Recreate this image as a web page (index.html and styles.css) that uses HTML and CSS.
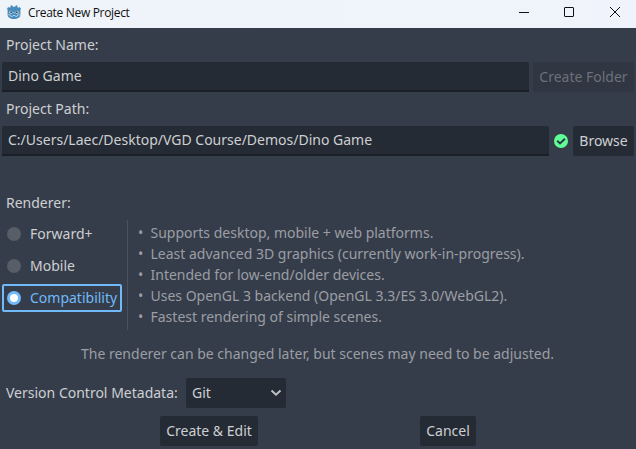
FILE: index.html
```html
<!DOCTYPE html>
<html lang="en">
<head>
<meta charset="utf-8">
<title>Create New Project</title>
<link rel="stylesheet" href="styles.css">
</head>
<body>
<header class="titlebar">
  <svg class="logo" width="14" height="14" viewBox="0 0 14 14">
    <path fill="#478cbf" d="M5 .2 6 1.700h2L9 .2l1.600.5-.1 1.600.8.5 1.300-.9L14 3.500l-.6 1.400v4.900c0 2.600-2.600 4.200-6.400 4.200S.6 12.400.6 9.800V4.900L0 3.500l1.400-1.600 1.300.9.8-.5L3.400.7z"/>
    <circle cx="3.900" cy="7.200" r="1.500" fill="#d4e3ee"/><circle cx="10.100" cy="7.200" r="1.500" fill="#d4e3ee"/>
    <circle cx="4.100" cy="7.200" r=".9" fill="#414042"/><circle cx="9.900" cy="7.200" r=".9" fill="#414042"/>
    <path stroke="#d4e3ee" stroke-width=".7" fill="none" d="M7 7v1.700M1 9.700l2.400.3.300 1.300h2L6 10.500h2l.3.800h2l.3-1.300 2.400-.3"/>
  </svg>
  <h1 class="title">Create New Project</h1>
  <svg class="controls" width="106" height="28" viewBox="0 0 106 28" fill="none" stroke="#111">
    <path d="M1 12.500h10"/><rect x="46.500" y="7.500" width="9" height="9" rx=".5"/><path d="M92 7l10 10M102 7l-10 10"/>
  </svg>
</header>
<main class="dialog">
  <div class="label">Project Name:</div>
  <div class="row">
    <div class="field">Dino Game</div>
    <button class="btn create-folder" disabled>Create Folder</button>
  </div>
  <div class="label">Project Path:</div>
  <div class="row">
    <div class="field">C:/Users/Laec/Desktop/VGD Course/Demos/Dino Game</div>
    <svg class="status" width="16" height="30" viewBox="0 0 16 30">
      <circle cx="8" cy="15" r="7" fill="#5fff97"/><path d="M4.200 14.800 7 17.400l4.900-4.700" fill="none" stroke="#2b3640" stroke-width="2"/>
    </svg>
    <button class="btn browse">Browse</button>
  </div>
  <div class="label renderer-label">Renderer:</div>
  <section class="renderer">
    <div class="options">
      <div class="option"><i class="radio"></i>Forward+</div>
      <div class="option"><i class="radio"></i>Mobile</div>
      <div class="option selected"><i class="radio"></i>Compatibility</div>
    </div>
    <ul class="features">
      <li>Supports desktop, mobile + web platforms.</li>
      <li>Least advanced 3D graphics (currently work-in-progress).</li>
      <li>Intended for low-end/older devices.</li>
      <li>Uses OpenGL 3 backend (OpenGL 3.3/ES 3.0/WebGL2).</li>
      <li>Fastest rendering of simple scenes.</li>
    </ul>
  </section>
  <p class="note">The renderer can be changed later, but scenes may need to be adjusted.</p>
  <div class="row">
    <div class="vcs-label">Version Control Metadata:</div>
    <div class="select">Git
      <svg width="12" height="8" viewBox="0 0 12 8" fill="none" stroke="#bfc2c5" stroke-width="2"><path d="M1.500 1.500 6 5.700l4.500-4.200"/></svg>
    </div>
  </div>
  <footer class="actions">
    <button class="btn create">Create &amp; Edit</button>
    <button class="btn cancel">Cancel</button>
  </footer>
</main>
</body>
</html>
```
FILE: styles.css
```css
* { box-sizing: border-box; }
body {
  margin: 0;
  width: 636px;
  height: 449px;
  overflow: hidden;
  background: #363d4a;
  color: #cdcfd2;
  font: 14px/20px "Noto Sans", sans-serif;
}
.titlebar {
  display: flex;
  align-items: flex-start;
  height: 28px;
  padding-left: 7px;
  background: linear-gradient(90deg, #eff4f9, #f0f3fb);
}
.logo { margin-top: 5px; }
.title {
  margin: 0 auto 0 7px;
  color: #111;
  font: 400 12px/26px "Open Sans", sans-serif;
  letter-spacing: -0.32px;
}
.controls { margin-right: 12px; }
.dialog { padding: 0 2px; }
.label { height: 34px; padding-left: 4px; line-height: 34px; }
.row { display: flex; height: 30px; }
.field {
  flex: 1;
  padding: 0 6px;
  background: #252b34;
  border-bottom: 2px solid #1b2027;
  border-radius: 2px 2px 0 0;
  line-height: 28px;
}
.btn {
  height: 30px;
  padding: 0;
  border: 0;
  border-radius: 2px;
  background: #252b34;
  color: inherit;
  font: inherit;
  line-height: 30px;
  text-align: center;
  white-space: nowrap;
}
.create-folder { width: 101px; margin-left: 4px; background: #303642; color: #6c717b; }
.status { margin: 0 4px; }
.browse { width: 61px; }
.renderer-label { margin-top: 30px; }
.renderer { display: flex; height: 110px; }
.options { display: flex; flex-direction: column; gap: 4px; width: 120px; }
.option {
  display: flex;
  align-items: center;
  gap: 9px;
  height: 28px;
  padding-left: 5px;
}
.radio { width: 14px; height: 14px; border-radius: 50%; background: #575e68; }
.selected {
  padding-left: 3px;
  border: 2px solid #70bafa;
  border-radius: 2px;
  color: #70bafa;
}
.selected .radio { background: #fff; border: 3px solid #70bafa; }
.features {
  margin: 0 0 0 5px;
  padding: 2px 0 0 10px;
  border-left: 1px solid #4b515d;
  color: #9b9ea4;
  line-height: 21px;
  list-style: none;
}
.features li::before { content: "•"; display: inline-block; width: 12.5px; }
.note { margin: 0; padding-right: 1px; height: 48px; color: #9b9ea4; line-height: 48px; text-align: center; }
.vcs-label { width: 184px; padding-left: 4px; line-height: 30px; }
.select {
  display: flex;
  align-items: center;
  justify-content: space-between;
  width: 100px;
  padding: 0 4px 0 6px;
  border-radius: 2px;
  background: #252b34;
}
.actions { display: flex; margin-top: 8px; padding-left: 158px; }
.create { width: 98px; }
.cancel { width: 56px; margin-left: 162px; }
```
